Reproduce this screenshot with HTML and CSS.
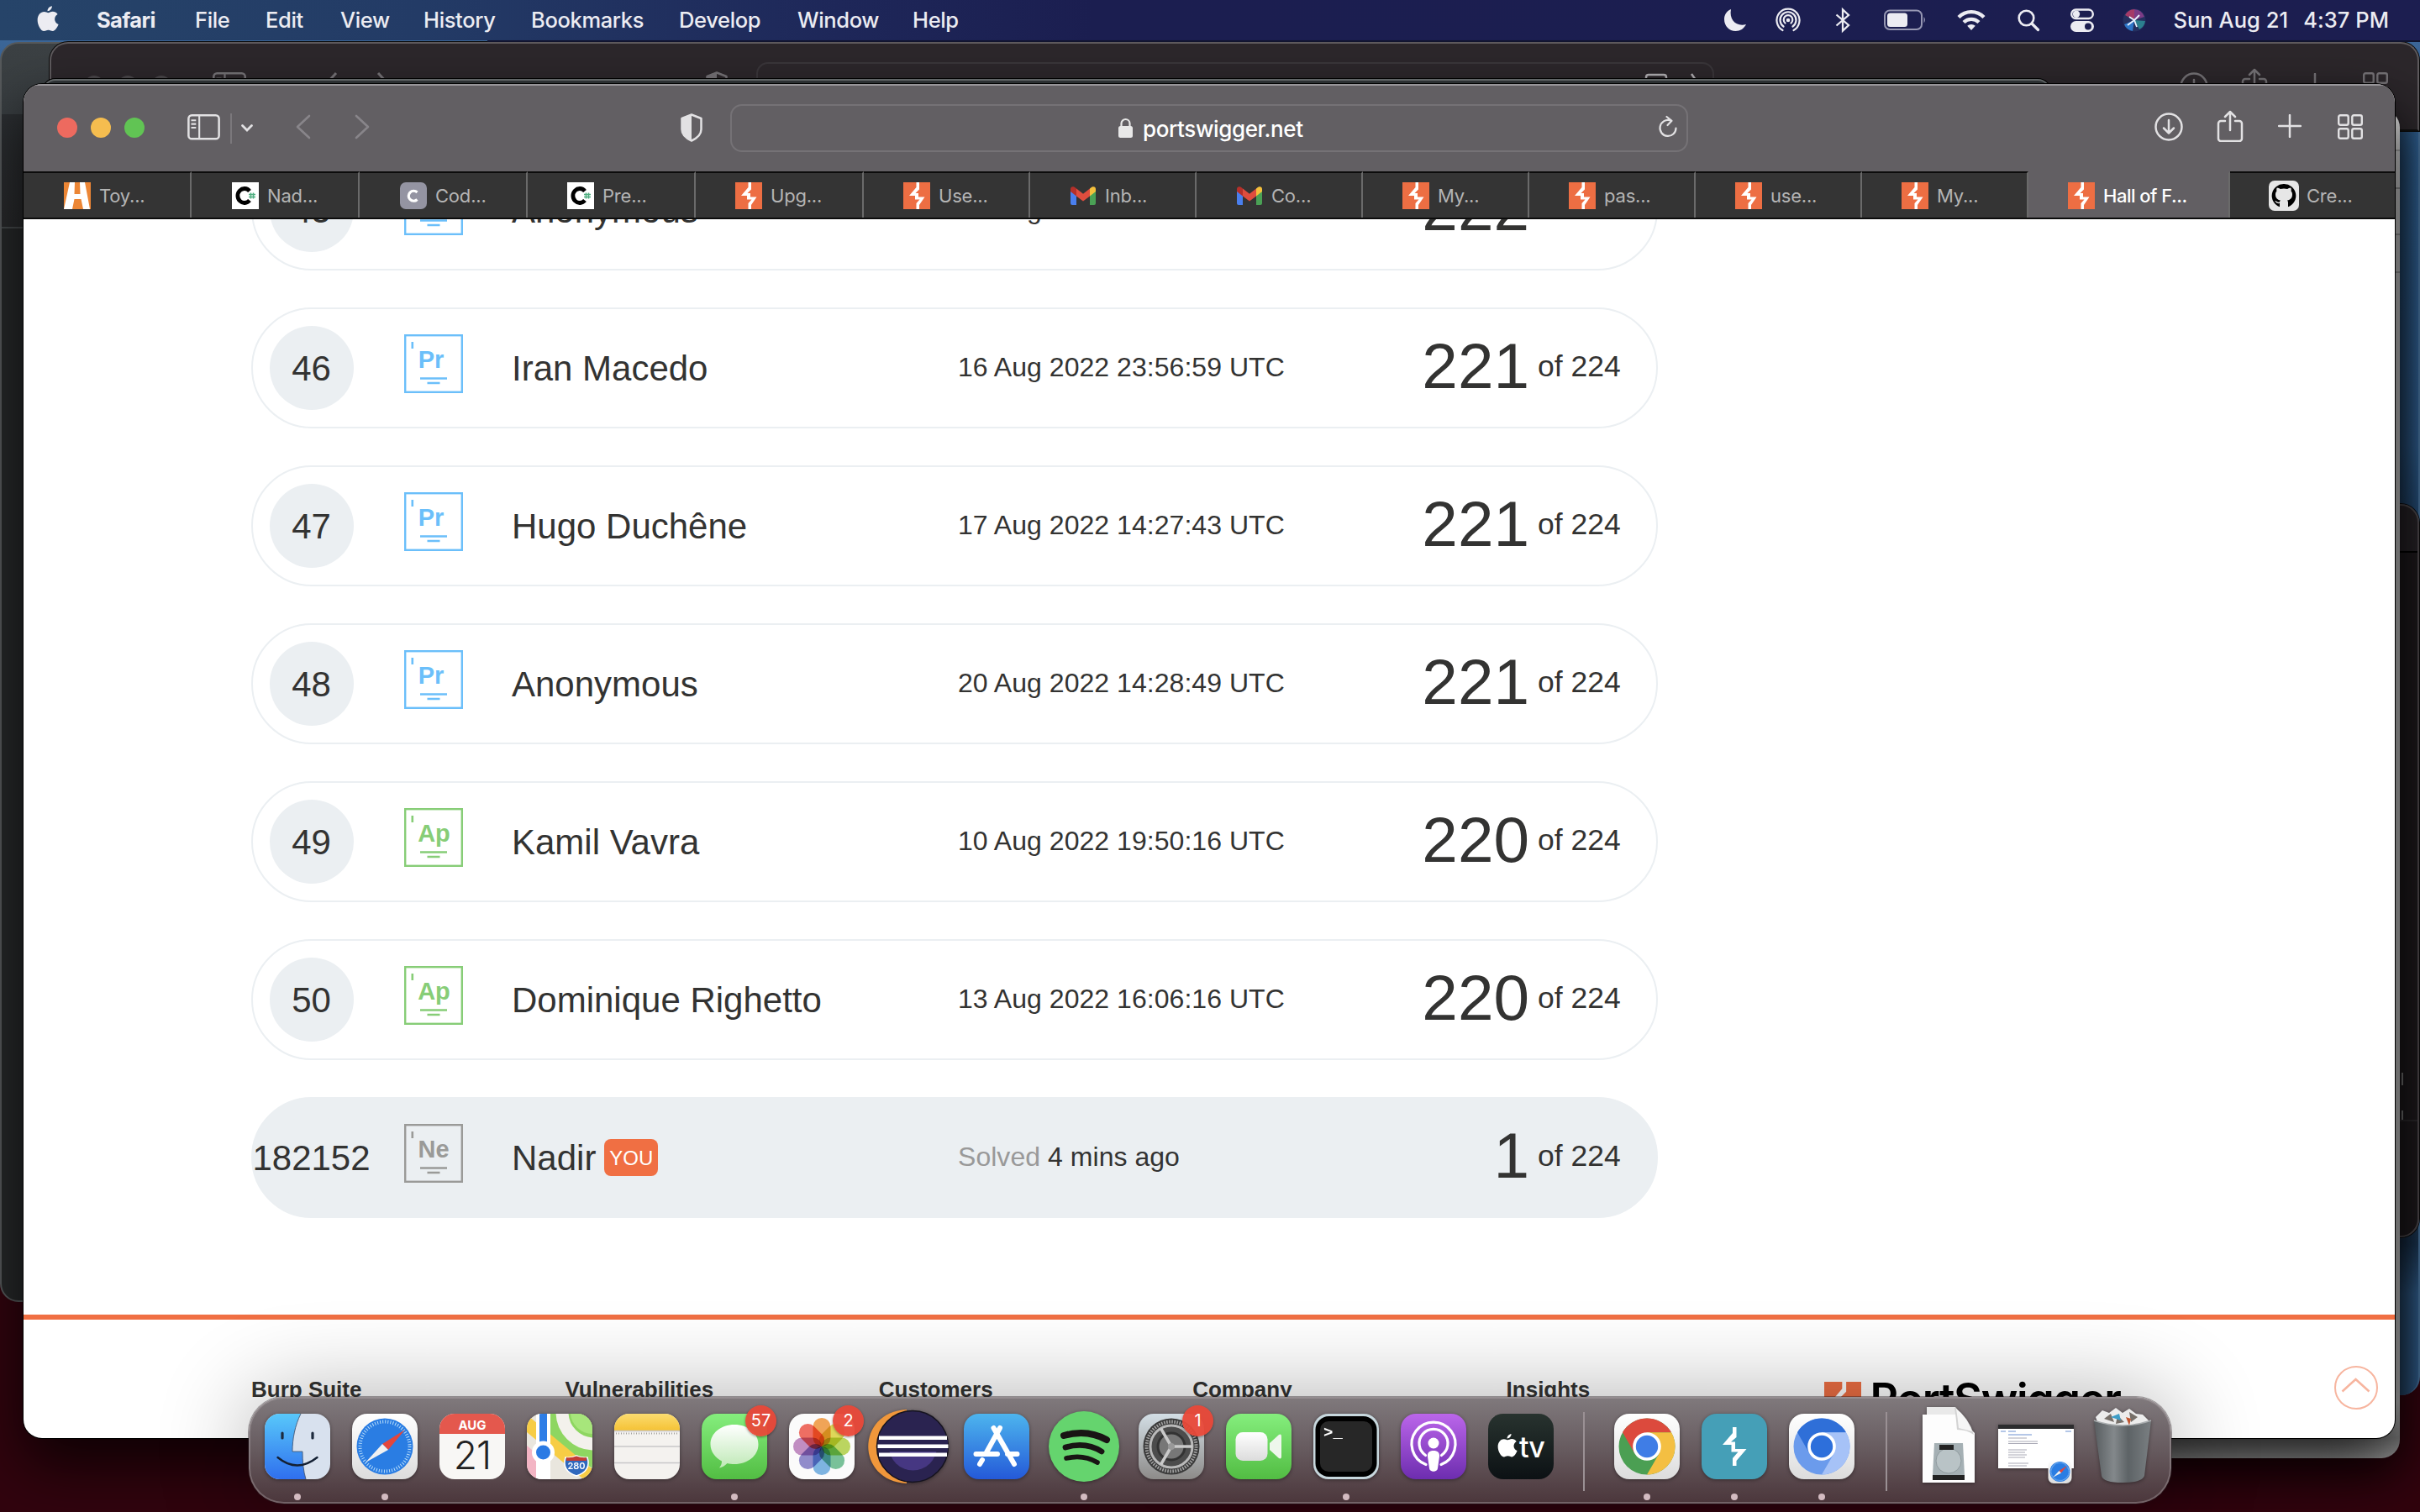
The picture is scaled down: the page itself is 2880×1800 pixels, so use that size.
FILE: index.html
```html
<!DOCTYPE html>
<html lang="en">
<head>
<meta charset="utf-8">
<title>Hall of Fame</title>
<link rel="stylesheet" href="styles.css">
</head>
<body>
<svg class="defs" width="0" height="0">
  <defs>
    <linearGradient id="gBlue" x1="0" y1="0" x2="0" y2="1"><stop offset="0" stop-color="#58c8fa"/><stop offset="1" stop-color="#2f6fee"/></linearGradient>
    <linearGradient id="gStore" x1="0" y1="0" x2="0" y2="1"><stop offset="0" stop-color="#4db5ee"/><stop offset="1" stop-color="#2459d8"/></linearGradient>
    <linearGradient id="gGreen" x1="0" y1="0" x2="0" y2="1"><stop offset="0" stop-color="#85ee7d"/><stop offset="1" stop-color="#52bd43"/></linearGradient>
    <linearGradient id="gWhite" x1="0" y1="0" x2="0" y2="1"><stop offset="0" stop-color="#ffffff"/><stop offset="1" stop-color="#dcdcdc"/></linearGradient>
    <linearGradient id="gBubble" x1="0" y1="0" x2="0" y2="1"><stop offset="0" stop-color="#ffffff"/><stop offset="1" stop-color="#bfe9b6"/></linearGradient>
    <linearGradient id="gPurple" x1="0" y1="0" x2="0" y2="1"><stop offset="0" stop-color="#bb66ea"/><stop offset="1" stop-color="#6d2daf"/></linearGradient>
    <linearGradient id="gYellow" x1="0" y1="0" x2="0" y2="1"><stop offset="0" stop-color="#fbdc70"/><stop offset="1" stop-color="#f5c235"/></linearGradient>
    <linearGradient id="gPref" x1="0" y1="0" x2="0" y2="1"><stop offset="0" stop-color="#d3dee5"/><stop offset="1" stop-color="#8d8b89"/></linearGradient>
    <linearGradient id="gBin" x1="0" y1="0" x2="1" y2="0"><stop offset="0" stop-color="#585d60"/><stop offset=".35" stop-color="#83888b"/><stop offset=".6" stop-color="#5d6366"/><stop offset="1" stop-color="#7a7f82"/></linearGradient>
    <clipPath id="tile"><rect width="78" height="78" rx="18"/></clipPath>
    <symbol id="apple" viewBox="0 0 24 28"><path d="M16.500 0c.3 2.600-2.200 5.600-4.900 5.500C11.300 3 13.800.3 16.500 0zM12.300 7.300c1.200 0 2.600-1.300 5-1.300 2 0 4.200 1.100 5.400 3-4.700 2.800-4 9.200.9 11.100-.9 2.700-3.600 7.300-6.200 7.300-1.900 0-2.600-1.200-4.900-1.200-2.200 0-3.100 1.200-4.800 1.200C4.400 27.400.6 20.800.6 15.300.6 9.500 4.300 6.200 7.800 6.200c2 0 3.500 1.100 4.500 1.100z"/></symbol>
    <symbol id="bolt" viewBox="0 0 32 32"><path fill="#ed6e43" d="M0 0h32v32H0z"/><path fill="#fff" d="M15.500 0h3.500v8.500L14.500 13H18v4.500h7.500L19 27v5h-3.500v-7l4-4.500H14V16H7l8.500-10z"/></symbol>
    <symbol id="csharp" viewBox="0 0 32 32"><path fill="#fff" d="M0 0h32v32H0z"/><path d="M21 10.500a8 8.500 0 1 0 0 11" fill="none" stroke="#000" stroke-width="4.800"/><path d="M22.500 12.500v7M25.500 12.500v7M20 14.500h8M20 17.500h8" stroke="#4fae80" stroke-width="1.500"/></symbol>
    <symbol id="gmail" viewBox="0 0 30 22"><path fill="#4a7fee" d="M0 4l7 5v13H2a2 2 0 0 1-2-2z"/><path fill="#4aa155" d="M30 4l-7 5v13h5a2 2 0 0 0 2-2z"/><path fill="#f4c03c" d="M23 2.500C27-1.500 30 .5 30 3v3l-7 5.500z"/><path fill="#b5302a" d="M7 2.500C3-1.500 0 .5 0 3v3l7 5.500z"/><path fill="#df4d3e" d="M7 2.500l8 6.300 8-6.300v9l-8 6-8-6z"/></symbol>
    <symbol id="download" viewBox="0 0 34 34"><g fill="none" stroke="currentColor" stroke-width="2.500" stroke-linecap="round" stroke-linejoin="round"><circle cx="17" cy="17" r="15.500"/><path d="M17 9v15M11 18.500l6 6 6-6"/></g></symbol>
    <symbol id="share" viewBox="0 0 32 38"><g fill="none" stroke="currentColor" stroke-width="2.500" stroke-linecap="round" stroke-linejoin="round"><path d="M10 13H5a3 3 0 0 0-3 3v18a3 3 0 0 0 3 3h22a3 3 0 0 0 3-3V16a3 3 0 0 0-3-3h-5M16 24V2M10 8l6-6 6 6"/></g></symbol>
    <symbol id="plus" viewBox="0 0 28 28"><path d="M14 1v26M1 14h26" fill="none" stroke="currentColor" stroke-width="2.500" stroke-linecap="round"/></symbol>
    <symbol id="grid" viewBox="0 0 30 30"><g fill="none" stroke="currentColor" stroke-width="2.400"><rect x="1.200" y="1.200" width="11.500" height="11.500" rx="2"/><rect x="17.300" y="1.200" width="11.500" height="11.500" rx="2"/><rect x="1.200" y="17.300" width="11.500" height="11.500" rx="2"/><rect x="17.300" y="17.300" width="11.500" height="11.500" rx="2"/></g></symbol>
    <symbol id="sidebar" viewBox="0 0 40 32"><g fill="none" stroke="currentColor" stroke-width="2.600"><rect x="1.300" y="1.300" width="37.400" height="29" rx="4"/><path d="M14.500 1v30M4.500 7.500h6M4.500 12h6M4.500 16.500h6" stroke-width="2.200"/></g></symbol>
    <symbol id="shield" viewBox="0 0 28 34"><path d="M14 1.500L2.500 6v13c0 6 5 10.500 11.500 13.500C20.500 29.500 25.500 25 25.500 19V6z" fill="none" stroke="currentColor" stroke-width="2.500" stroke-linejoin="round"/><path d="M14 1.500L2.500 6v13c0 6 5 10.500 11.500 13.500z" fill="currentColor"/></symbol>
    <symbol id="badge" viewBox="0 0 70 70"><g fill="none" stroke="currentColor"><rect x="1.200" y="1.200" width="67.600" height="67.600" stroke-width="2.400"/><path d="M9.800 9v8M19 52.500h32M27.500 58h15" stroke-width="2.600"/></g></symbol>
    <symbol id="compass" viewBox="0 0 78 78"><rect width="78" height="78" rx="18" fill="url(#gWhite)"/><circle cx="39" cy="39" r="33.500" fill="#2a7de3"/><circle cx="39" cy="39" r="29.500" fill="none" stroke="#b9defa" stroke-width="4" stroke-dasharray="1 2.090"/><path d="M63 19L43 43l-7-7z" fill="#e3463c"/><path d="M16 58l20-22 7 7z" fill="#f1f1f1"/></symbol>
  </defs>
</svg>

<div class="desktop">
  <div class="win win-blue"></div>
  <div class="win win-term"></div>
  <div class="win win-left"></div>
  <div class="win win-back">
    <i class="ghost-dots"></i>
    <svg class="bk bk-side"><use href="#sidebar"/></svg>
    <svg class="bk bk-nav" viewBox="0 0 90 30"><path d="M14 1L2 14M64 1l12 13" fill="none" stroke="currentColor" stroke-width="3"/></svg>
    <svg class="bk bk-shield"><use href="#shield"/></svg>
    <i class="ghost-url"></i>
    <svg class="bk bk-card" viewBox="0 0 70 20"><path d="M2 20V6q0-3 3-3h18q3 0 3 3v14M56 2l7 10" fill="none" stroke="currentColor" stroke-width="2.500"/></svg>
    <svg class="bk bk-dl"><use href="#download"/></svg>
    <svg class="bk bk-share"><use href="#share"/></svg>
    <svg class="bk bk-plus"><use href="#plus"/></svg>
    <svg class="bk bk-grid"><use href="#grid"/></svg>
  </div>
  <div class="win win-light"></div>
  <div class="win win-sliver"></div>

  <header class="menubar">
    <svg class="m-apple"><use href="#apple"/></svg>
    <nav class="menus">
      <b class="w-safari">Safari</b><span class="w-file">File</span><span class="w-edit">Edit</span><span class="w-view">View</span><span class="w-history">History</span><span class="w-book">Bookmarks</span><span class="w-dev">Develop</span><span class="w-window">Window</span><span>Help</span>
    </nav>
    <div class="status">
      <svg class="s-moon" viewBox="0 0 26 26"><path d="M8 0C2 2.500 0 7.500 0 12c0 8 6 14 13.500 14 5.500 0 10-3 12.500-8C14.500 21 5.500 13 8 0z" fill="currentColor"/></svg>
      <svg class="s-air" viewBox="0 0 30 28"><g fill="none" stroke="currentColor" stroke-width="2.200" stroke-linecap="round"><path d="M8.500 26A13.500 13.500 0 1 1 21.500 26M9.500 21.500A9.500 9.500 0 1 1 20.500 21.500M11.500 17.500A5.300 5.300 0 1 1 18.500 17.500"/></g><circle cx="15" cy="14" r="2.300" fill="currentColor"/></svg>
      <svg class="s-bt" viewBox="0 0 18 28"><path d="M1.500 7.500L16 20l-7 6.500V1.500L16 8 1.500 20.500" fill="none" stroke="currentColor" stroke-width="2.300"/></svg>
      <svg class="s-bat" viewBox="0 0 52 26"><rect x="1" y="1.500" width="44" height="22.500" rx="6" fill="none" stroke="#9697b3" stroke-width="2"/><rect x="4" y="4.500" width="24" height="16.500" rx="3.500" fill="currentColor"/><path d="M47.500 9q3 3.700 0 7.500z" fill="#9697b3"/></svg>
      <svg class="s-wifi" viewBox="0 0 34 26"><g fill="none" stroke="currentColor" stroke-width="4.300"><path d="M2 9.500a21 21 0 0 1 30 0M8 15.500a12.800 12.800 0 0 1 18 0"/></g><path d="M17 25l-4.800-5.200a7 7 0 0 1 9.600 0z" fill="currentColor"/></svg>
      <svg class="s-find" viewBox="0 0 26 26"><circle cx="10.500" cy="10.500" r="8.800" fill="none" stroke="currentColor" stroke-width="2.600"/><path d="M17 17l7.500 7.500" stroke="currentColor" stroke-width="3.200" stroke-linecap="round"/></svg>
      <svg class="s-ctl" viewBox="0 0 28 28"><rect x="1.200" y="1.500" width="25.600" height="10.500" rx="5.200" fill="none" stroke="currentColor" stroke-width="2.400"/><circle cx="7" cy="6.800" r="4.200" fill="currentColor"/><rect y="15" width="28" height="13" rx="6.500" fill="currentColor"/><circle cx="21" cy="21.500" r="4" fill="#1c1e50"/></svg>
      <svg class="s-siri" viewBox="0 0 28 28"><circle cx="14" cy="14" r="13.500" fill="#25305f"/><path d="M14 1a13 13 0 0 1 12 9l-12 4z" fill="#7c3b86"/><path d="M3 8a13 13 0 0 1 11-7v13z" fill="#a53a68"/><path d="M2 19a13 13 0 0 0 10 8l2-13z" fill="#2d75c8"/><path d="M27 15a13 13 0 0 1-7 10l-6-11z" fill="#2b7f8e"/><path d="M14 14L6 20M14 14l6-6M14 14l3 8M14 14L8 10" stroke="#e8f3ff" stroke-width="1.800"/></svg>
      <span class="date">Sun Aug 21</span><span>4:37 PM</span>
    </div>
  </header>

  <main class="safari">
    <div class="toolbar">
      <div class="lights"><i class="r"></i><i class="y"></i><i class="g"></i></div>
      <svg class="t-side"><use href="#sidebar"/></svg>
      <i class="t-rule"></i>
      <svg class="t-drop" viewBox="0 0 14 9"><path d="M1.500 1.500L7 7l5.500-5.500" fill="none" stroke="currentColor" stroke-width="2.800" stroke-linecap="round"/></svg>
      <svg class="t-nav" viewBox="0 0 88 30"><path d="M16 2L2 15l14 13M72 2l14 13-14 13" fill="none" stroke="currentColor" stroke-width="2.600" stroke-linecap="round" stroke-linejoin="round"/></svg>
      <svg class="t-shield"><use href="#shield"/></svg>
      <div class="url">
        <svg class="lock" viewBox="0 0 17 24"><rect y="10" width="17" height="14" rx="2.500" fill="currentColor"/><path d="M3.500 11V7a5 5 0 0 1 10 0v4" fill="none" stroke="currentColor" stroke-width="2.200"/></svg>
        <span>portswigger.net</span>
        <svg class="reload" viewBox="0 0 22 26"><path d="M20.500 14.500a9.500 9.500 0 1 1-7-9.200M9.500 1l6 4.800-5 5.200" fill="none" stroke="currentColor" stroke-width="2.200" stroke-linecap="round" stroke-linejoin="round"/></svg>
      </div>
      <div class="tools">
        <svg class="i-dl"><use href="#download"/></svg>
        <svg class="i-share"><use href="#share"/></svg>
        <svg class="i-plus"><use href="#plus"/></svg>
        <svg class="i-grid"><use href="#grid"/></svg>
      </div>
    </div>
    <nav class="tabs">
      <a><svg viewBox="0 0 32 32"><path fill="#ec8635" d="M0 0h32v32H0z"/><path fill="#fff" d="M7 0h6l-.5 14h7L19 0h6l6 32h-8l-2.500-12h-8L10 32H0z"/></svg>Toy...</a>
      <a><svg><use href="#csharp"/></svg>Nad...</a>
      <a><svg viewBox="0 0 32 32"><rect width="32" height="32" rx="7" fill="#9494a2"/><path d="M20.500 12a6 6 0 1 0 0 8.500" fill="none" stroke="#fff" stroke-width="3.200"/></svg>Cod...</a>
      <a><svg><use href="#csharp"/></svg>Pre...</a>
      <a><svg><use href="#bolt"/></svg>Upg...</a>
      <a><svg><use href="#bolt"/></svg>Use...</a>
      <a><svg><use href="#gmail"/></svg>Inb...</a>
      <a><svg><use href="#gmail"/></svg>Co...</a>
      <a><svg><use href="#bolt"/></svg>My...</a>
      <a><svg><use href="#bolt"/></svg>pas...</a>
      <a><svg><use href="#bolt"/></svg>use...</a>
      <a><svg><use href="#bolt"/></svg>My...</a>
      <a class="on"><svg><use href="#bolt"/></svg>Hall of F...</a>
      <a class="last"><svg viewBox="0 0 36 36"><rect width="36" height="36" rx="7" fill="#e6e6e6"/><path d="M18 4a14 14 0 0 0-5 27.200V27c-4 .8-4.500-2-6-3 2-.3 3 2.500 6 1.500.1-1 .5-1.600 1-2-4-.6-6-3-6-7 0-1.800.5-3 1.500-4-.4-1.500-.2-3 .3-4 1.700 0 3 .8 4 1.500a16 16 0 0 1 8.400 0c1-.7 2.300-1.500 4-1.500.5 1 .7 2.500.3 4 1 1 1.500 2.200 1.500 4 0 4-2 6.400-6 7 .7.600 1 1.600 1 3v4.700A14 14 0 0 0 18 4z"/></svg>Cre...</a>
    </nav>

    <section class="page">
      <div class="board">
        <div class="row"><span class="rank"><em>45</em></span><span class="lvl pr"><svg><use href="#badge"/></svg><b>Pr</b></span><span class="name">Anonymous</span><span class="when">16 Aug 2022 22:33:48 UTC</span><span class="score">222</span><span class="of">of 224</span></div>
        <div class="row"><span class="rank"><em>46</em></span><span class="lvl pr"><svg><use href="#badge"/></svg><b>Pr</b></span><span class="name">Iran Macedo</span><span class="when">16 Aug 2022 23:56:59 UTC</span><span class="score">221</span><span class="of">of 224</span></div>
        <div class="row"><span class="rank"><em>47</em></span><span class="lvl pr"><svg><use href="#badge"/></svg><b>Pr</b></span><span class="name">Hugo Duchêne</span><span class="when">17 Aug 2022 14:27:43 UTC</span><span class="score">221</span><span class="of">of 224</span></div>
        <div class="row"><span class="rank"><em>48</em></span><span class="lvl pr"><svg><use href="#badge"/></svg><b>Pr</b></span><span class="name">Anonymous</span><span class="when">20 Aug 2022 14:28:49 UTC</span><span class="score">221</span><span class="of">of 224</span></div>
        <div class="row"><span class="rank"><em>49</em></span><span class="lvl ap"><svg><use href="#badge"/></svg><b>Ap</b></span><span class="name">Kamil Vavra</span><span class="when">10 Aug 2022 19:50:16 UTC</span><span class="score">220</span><span class="of">of 224</span></div>
        <div class="row"><span class="rank"><em>50</em></span><span class="lvl ap"><svg><use href="#badge"/></svg><b>Ap</b></span><span class="name">Dominique Righetto</span><span class="when">13 Aug 2022 16:06:16 UTC</span><span class="score">220</span><span class="of">of 224</span></div>
        <div class="row me"><span class="rank"><em>182152</em></span><span class="lvl ne"><svg><use href="#badge"/></svg><b>Ne</b></span><span class="name">Nadir<i class="you">YOU</i></span><span class="when"><span class="dim">Solved</span> 4 mins ago</span><span class="score">1</span><span class="of">of 224</span></div>
      </div>
      <footer class="foot">
        <b>Burp Suite</b><b>Vulnerabilities</b><b>Customers</b><b>Company</b><b>Insights</b>
        <div class="brand"><svg><use href="#bolt"/></svg><span>PortSwigger</span></div>
      </footer>
    </section>
    <a class="to-top"><svg viewBox="0 0 52 52"><circle cx="26" cy="26" r="25" fill="none" stroke="#f7b59f" stroke-width="2"/><path d="M9.500 30.500L25.500 16l16 14.500" fill="none" stroke="#f7b59f" stroke-width="2.600"/></svg></a>
  </main>

  <div class="dock">
    <div class="app run"><svg viewBox="0 0 78 78"><g clip-path="url(#tile)"><path fill="#d8e1ee" d="M0 0h78v78H0z"/><path fill="url(#gBlue)" d="M0 0h43C36 14 33 30 33 45h12c0 12 1 23 4 33H0z"/></g><path d="M43 0C36 14 33 30 33 45h12c0 12 1 23 4 33" fill="none" stroke="#3b4b66" stroke-width=".8"/><path d="M21 23v6M57 23v6" stroke="#1d2a3d" stroke-width="3.200" stroke-linecap="round"/><path d="M15.500 52q23 19 47 0" fill="none" stroke="#142033" stroke-width="2.400" stroke-linecap="round"/></svg></div>
    <div class="app run"><svg><use href="#compass"/></svg></div>
    <div class="app"><div class="cal"><b>AUG</b><span>21</span></div></div>
    <div class="app"><svg viewBox="0 0 78 78"><g clip-path="url(#tile)"><path fill="#e9e6de" d="M0 0h78v78H0z"/><path fill="#8ed661" d="M28 0h50v65L28 30z"/><circle cx="80" cy="-2" r="38" fill="none" stroke="#f3f1ec" stroke-width="15"/><path fill="#a7e67b" d="M52 0h26v24A26 26 0 0 1 52 0z"/><path d="M-2 10l82 68" stroke="#f7cd45" stroke-width="16"/><path fill="#f3b5c4" d="M0 38l12 10v30H0z"/><path fill="#fff" d="M11 0h17v78H11z"/><path fill="#2d7de6" d="M15 0h9v44h-9z"/></g><circle cx="19.500" cy="46" r="13.500" fill="#fff"/><circle cx="19.500" cy="46" r="8.500" fill="#2a7ae4"/><path d="M46 52q6 1 13-2 7 3 13 2 5 16-13 22-18-6-13-22z" fill="#2f68bd" stroke="#fff" stroke-width="1.500"/><path d="M47 52q6 1 12-1.500 6 2.500 12 1.500v4H47z" fill="#c23c35"/><text x="59" y="66" class="shield-t">280</text></svg></div>
    <div class="app"><svg viewBox="0 0 78 78"><g clip-path="url(#tile)"><path fill="#f4f2ef" d="M0 0h78v78H0z"/><path fill="url(#gYellow)" d="M0 0h78v20H0z"/><path d="M2 23.500h74" stroke="#a5a3a0" stroke-width="2" stroke-dasharray="1 2"/><path d="M0 20.500h78M0 39h78M0 58.500h78" stroke="#c7c7c9" stroke-width="1.300"/></g></svg></div>
    <div class="app run"><svg viewBox="0 0 78 78"><rect width="78" height="78" rx="18" fill="url(#gGreen)"/><path d="M39 13c16 0 28.500 10 28.500 23.500S55 60 39 60c-3 0-6-.4-8.500-1-3 3-6 5-9.500 5.500 2-2.500 3-5 3-8C16 52 10.500 45 10.500 36.500 10.500 23 23 13 39 13z" fill="url(#gBubble)"/></svg><span class="count">57</span></div>
    <div class="app"><svg viewBox="0 0 78 78"><rect width="78" height="78" rx="18" fill="#fbfbfb"/><g class="petals"><rect x="28.500" y="5" width="21" height="34" rx="10.500" fill="#f08a1f"/><rect x="28.500" y="5" width="21" height="34" rx="10.500" fill="#d9cf22" transform="rotate(45 39 39)"/><rect x="28.500" y="5" width="21" height="34" rx="10.500" fill="#a8cc2b" transform="rotate(90 39 39)"/><rect x="28.500" y="5" width="21" height="34" rx="10.500" fill="#4fb07a" transform="rotate(135 39 39)"/><rect x="28.500" y="5" width="21" height="34" rx="10.500" fill="#559fdd" transform="rotate(180 39 39)"/><rect x="28.500" y="5" width="21" height="34" rx="10.500" fill="#6f68bf" transform="rotate(225 39 39)"/><rect x="28.500" y="5" width="21" height="34" rx="10.500" fill="#b06ab2" transform="rotate(270 39 39)"/><rect x="28.500" y="5" width="21" height="34" rx="10.500" fill="#ee4030" transform="rotate(315 39 39)"/></g></svg><span class="count">2</span></div>
    <div class="app"><svg class="wide eclipse" viewBox="0 0 96 88"><path d="M46 0C-15 3-15 85 46 88z" fill="#f0973b"/><circle cx="53" cy="44" r="42.500" fill="#2a2350" stroke="#15131f" stroke-width="1.500"/><path d="M25 44h57a28 28 0 0 1-57 0z" fill="#463782"/><path fill="#2a2350" d="M12 36h83v14H12z"/><path fill="#fff" d="M13 31.500h81v4.500H13zM11.500 41.500h84V46h-84zM13 51.500h81V56H13z"/></svg></div>
    <div class="app"><svg viewBox="0 0 78 78"><rect width="78" height="78" rx="18" fill="url(#gStore)"/><path d="M43 17L27 46M35.500 17L60 60M14.500 48H40M52 48h11.500M22 55l-3 5" stroke="#fff" stroke-width="6" stroke-linecap="round"/></svg></div>
    <div class="app run"><svg class="wide" viewBox="0 0 84 84"><circle cx="42" cy="42" r="42" fill="#65d46e"/><g fill="none" stroke="#191414" stroke-linecap="round"><path d="M18 29q28-8 51 5" stroke-width="8"/><path d="M20 43q24-7 43 5" stroke-width="6.800"/><path d="M21 56q20-5 37 5" stroke-width="5.600"/></g></svg></div>
    <div class="app"><svg viewBox="0 0 78 78"><rect width="78" height="78" rx="18" fill="url(#gPref)"/><circle cx="39" cy="39" r="33.500" fill="#3a3a3a"/><circle cx="39" cy="39" r="29.500" fill="none" stroke="#a2a2a2" stroke-width="4" stroke-dasharray="1.600 1.490"/><circle cx="39" cy="39" r="25" fill="#4c4c4c" stroke="#b9b9b9" stroke-width="3"/><circle cx="39" cy="39" r="16" fill="#777" stroke="#333" stroke-width="3"/><path d="M39 39h25M39 39L26.500 17.500M39 39L26.500 60.500" stroke="#c9c9c9" stroke-width="3.500"/><circle cx="39" cy="39" r="4" fill="#999"/></svg><span class="count">1</span></div>
    <div class="app"><svg viewBox="0 0 78 78"><rect width="78" height="78" rx="18" fill="url(#gGreen)"/><rect x="11.500" y="22" width="38" height="34" rx="8.500" fill="url(#gWhite)"/><path d="M52 35l11-10q3-1.500 3 2v24q0 3.500-3 2L52 43z" fill="#eef7ec"/></svg></div>
    <div class="app run"><svg viewBox="0 0 78 78"><rect width="78" height="78" rx="18" fill="#c7d7dd"/><rect x="2.500" y="3" width="73" height="72" rx="16" fill="#000"/><rect x="8" y="9" width="62" height="60" rx="10" fill="#272727"/><text x="12" y="28" class="term">&gt;_</text></svg></div>
    <div class="app"><svg viewBox="0 0 78 78"><rect width="78" height="78" rx="18" fill="url(#gPurple)"/><g fill="none" stroke="#fff" stroke-width="3.200" stroke-linecap="round"><path d="M30 60.500a26 26 0 1 1 18 0"/><path d="M29.500 49.500a17 17 0 1 1 19 0"/></g><circle cx="39" cy="35" r="6.500" fill="#fff"/><path d="M39 44c5 0 7.500 2.500 7 7l-2 14c-.5 5-9.500 5-10 0l-2-14c-.5-4.500 2-7 7-7z" fill="#fff"/></svg></div>
    <div class="app"><div class="tv"><svg><use href="#apple"/></svg>tv</div></div>
    <i class="sep"></i>
    <div class="app run"><svg viewBox="0 0 78 78"><rect width="78" height="78" rx="18" fill="url(#gWhite)"/><circle cx="39" cy="39" r="33.500" fill="#4b9f53"/><path d="M10 22.200A33.500 33.500 0 0 1 68 22.200L39 22.200 24.500 47.400z" fill="#dc4a3d"/><path d="M68 22.200A33.500 33.500 0 0 1 39 72.500L53.500 47.400 39 22.200z" fill="#f4bf42"/><circle cx="39" cy="39" r="16.800" fill="#fff"/><circle cx="39" cy="39" r="13.200" fill="#3f7de6"/></svg></div>
    <div class="app run"><svg viewBox="0 0 78 78"><rect width="78" height="78" rx="18" fill="#459fb7"/><path d="M37 16h4.500v12L35 33.500h5V42h13.500L41.500 56v6H37v-9l6.500-7.500h-8V37H25L37 23z" fill="#fff"/></svg></div>
    <div class="app run"><svg viewBox="0 0 78 78"><rect width="78" height="78" rx="18" fill="url(#gWhite)"/><circle cx="39" cy="39" r="33.500" fill="#6b9bec"/><path d="M10 22.200A33.500 33.500 0 0 1 68 22.200L39 22.200 24.500 47.400z" fill="#2f6fd8"/><path d="M68 22.200A33.500 33.500 0 0 1 39 72.500L53.500 47.400 39 22.200z" fill="#a6c2f7"/><circle cx="39" cy="39" r="16.800" fill="#fff"/><circle cx="39" cy="39" r="13.200" fill="#2d6fdb"/></svg></div>
    <i class="sep sep2"></i>
    <div class="app"><svg class="doc" viewBox="0 0 62 90"><path fill="#e9e9e9" d="M5 0h34l8 10v20H5z"/><path fill="#fdfdfd" d="M0 9h40l22 22v59H0z"/><path fill="#d3d3d3" d="M38 0q2 14 3 27 12 0 20 6Q56 14 38 0z"/><path fill="#f6f6f6" d="M40 2q2 13 3 23l16 4Q53 12 40 2z"/><path fill="#a5b0b4" d="M14 43h34l2 38H12z"/><circle cx="31" cy="64" r="15" fill="#b9c3c6" stroke="#8f9a9e"/><path fill="#222" d="M20 45h17v6H20zM12 81h38v6H12z"/></svg></div>
    <div class="app"><svg class="mini" viewBox="0 0 90 70"><path fill="#fff" d="M0 0h90v52H0z"/><path fill="#2c2c2e" d="M0 0h90v5H0z"/><path d="M3 8h6M12 8h9M80 8h7M12 12h28" stroke="#6b8fd0" stroke-width="1"/><path d="M12 16h22M12 20h35M12 22.500h35M12 30h22M12 33h20M12 36h22M12 39h20M12 46h24M12 49h22" stroke="#a9a9b5" stroke-width="1"/><svg x="59" y="42" width="29" height="28"><use href="#compass"/></svg></svg></div>
    <div class="app"><svg class="bin" viewBox="0 0 68 90"><path d="M2 12l8-8 8 3 8-6 8 6 8-5 8 6 8 1 8 8-6 12H8z" fill="#ececec"/><path d="M12 14l8-6 4 10zM28 10l8 8-10 2zM42 6l10 6-8 6z" fill="#77706a"/><path d="M20 12l10-4 2 8z" fill="#3d9dc7"/><path d="M38 12l6 2-2 8z" fill="#c0552f"/><path d="M0 16q34 12 68 0L60 82q-3 8-26 8T9 82z" fill="url(#gBin)"/><path d="M0 16q34 12 68 0" fill="none" stroke="#a9adaf" stroke-width="1.500"/></svg></div>
  </div>
</div>
</body>
</html>
```

FILE: styles.css
```css
* { box-sizing: border-box; }
body { margin: 0; font-family: Inter, "Liberation Sans", sans-serif; }
.defs { position: absolute; }
svg { display: block; flex: none; overflow: visible; }

.desktop {
  position: relative;
  width: 2880px;
  height: 1800px;
  overflow: hidden;
  background: linear-gradient(#3d6da0 0, #35507e 200px, #2b2350 600px, #31040e 1300px, #31040e 100%);
}
.desktop::after {
  content: "";
  position: absolute;
  left: 580px; top: 48px;
  width: 2300px; height: 2px;
  background: #11142f;
}

/* Stacked windows on the desktop */
.win { position: absolute; overflow: hidden; }
.win-blue {
  left: 2600px; top: 100px; width: 280px; height: 1561px;
  border-radius: 0 0 22px 22px;
  border-right: 2px solid #456f98;
  background: linear-gradient(90deg, rgba(0, 0, 0, .25) 256px, rgba(0, 0, 0, 0)), linear-gradient(#2f5f90 0, #2d5988 430px, #234a73 510px, #1a3450 1380px, #2f5985 1440px, #2f5985);
}
.win-term {
  left: 2600px; top: 600px; width: 279px; height: 873px;
  border-radius: 22px;
  border: 2px solid #4c474a;
  background:
    linear-gradient(#777, #777) 256px 675px / 2px 15px no-repeat,
    linear-gradient(#777, #777) 256px 720px / 2px 11px no-repeat,
    linear-gradient(#262226 54px, #000 54px, #000 56px, #1d191c 56px, #1d191c 731px, #2b282b 731px, #2b282b 733px, #1d191c 733px);
  box-shadow: 0 0 0 1px #0b0b0b;
}
.win-left {
  left: 0; top: 50px; width: 700px; height: 1500px;
  border-radius: 22px;
  border: 2px solid #56595b;
  background: linear-gradient(#3c4144 0, #383d40 84px, #2b2e31 84px, #28292b 218px, #44484a 218px, #44484a 220px, #262829 220px, #262829);
}
.win-back {
  left: 59px; top: 50px; width: 2820px; height: 106px;
  border-radius: 22px 22px 0 0;
  border: 2px solid #5e5a5d;
  border-bottom-color: #111;
  background: #2c272b;
  box-shadow: 0 0 0 1px #0b0b0b;
  color: #757276;
}
.ghost-dots {
  position: absolute; left: 39px; top: 38px;
  width: 24px; height: 24px; border-radius: 50%;
  background: #4a474a;
  box-shadow: 40px 0 #4a474a, 80px 0 #4a474a;
}
.ghost-url {
  position: absolute; left: 839px; top: 22px;
  width: 1140px; height: 56px;
  border: 2px solid #3a363a; border-radius: 14px;
}
.bk { position: absolute; top: 34px; }
.bk-side { left: 192px; width: 40px; height: 32px; }
.bk-nav { left: 325px; width: 90px; height: 30px; }
.bk-shield { left: 778px; top: 33px; width: 28px; height: 34px; }
.bk-card { left: 1896px; top: 34px; width: 70px; height: 20px; color: #b0aeb1; }
.bk-dl { left: 2533px; width: 34px; height: 34px; }
.bk-share { left: 2606px; top: 29px; width: 32px; height: 38px; }
.bk-plus { left: 2680px; top: 35px; width: 28px; height: 28px; }
.bk-grid { left: 2751px; width: 30px; height: 30px; }
.win-sliver {
  left: 50px; top: 94px; width: 2391px; height: 60px;
  border-radius: 16px 16px 0 0;
  border: 2px solid #6d7274;
  background: #33383b;
  box-shadow: 0 0 0 1px #000;
}
.win-light {
  left: 1400px; top: 130px; width: 1456px; height: 1606px;
  border-radius: 22px;
  background: linear-gradient(#e4e4e4 0, #c4c4c4 48px, #999 48px, #999 50px, #bdbdbd 50px, #b4b4b4 93px, #808080 93px, #808080 95px, #b0b0b0 95px, #adadad 148px, #808080 148px, #808080 150px, #a8a8a8 150px, #a8a8a8 193px, #808080 193px, #808080 195px, #a8a8a8 195px, #a8a8a8 1540px, #7a7a7a 1582px, #989898);
  box-shadow: 0 20px 50px rgba(0, 0, 0, .5);
}

/* Menu bar */
.menubar {
  position: absolute; left: 0; top: 0;
  width: 2880px; height: 48px;
  display: flex; align-items: center;
  padding: 0 37px 0 44px;
  background: linear-gradient(90deg, #264469 0, #233b66 500px, #1e2759 1000px, #1b1e50 1300px, #1c1e50);
  color: #ececf2;
  font-size: 25.5px; line-height: 48px;
}
.m-apple { width: 26px; height: 31px; margin-top: -4px; fill: currentColor; }
.menus { display: flex; flex: 1; margin-left: 45px; font-weight: 500; letter-spacing: -.35px; }
.menus b { font-weight: 700; letter-spacing: -.6px; }
.w-safari { width: 117px; }
.w-file { width: 84px; }
.w-edit { width: 89px; }
.w-view { width: 99px; }
.w-history { width: 128px; }
.w-book { width: 176px; }
.w-dev { width: 141px; }
.w-window { width: 137px; }
.status { display: flex; align-items: center; font-weight: 500; letter-spacing: .05px; white-space: nowrap; }
.status svg { height: 28px; }
.s-moon { width: 26px; margin-right: 35px; }
.s-air { width: 30px; margin-right: 41px; }
.s-bt { width: 18px; margin-right: 40px; }
.s-bat { width: 52px; margin-right: 35px; }
.s-wifi { width: 34px; margin-right: 38px; }
.s-find { width: 26px; margin-right: 37px; }
.s-ctl { width: 28px; margin-right: 34px; }
.s-siri { width: 28px; margin-right: 32px; }
.date { margin-right: 18px; }

/* Browser window */
.safari {
  position: absolute; left: 28px; top: 100px;
  width: 2822px; height: 1612px;
  border-radius: 22px;
  overflow: hidden;
  background: #fff;
  box-shadow: 0 0 0 1px #000, 0 30px 70px rgba(0, 0, 0, .75);
}
.toolbar {
  height: 104px;
  display: flex; align-items: center;
  padding: 0 38px 0 40px;
  border-top: 2px solid #98969a;
  background: #625f63;
  color: #e2e1e3;
}
.lights { display: flex; gap: 16px; margin-top: -2px; }
.lights i { width: 24px; height: 24px; border-radius: 50%; }
.r { background: #ed6a5f; }
.y { background: #f5bd4f; }
.g { background: #61c454; }
.t-side { width: 39px; height: 31px; margin: -4px 0 0 51px; }
.t-rule { width: 2px; height: 36px; margin-left: 12px; background: #7b787c; }
.t-drop { width: 14px; height: 9px; margin: -2px 0 0 11px; }
.t-nav { width: 88px; height: 30px; margin: -4px 0 0 51px; color: #88858a; }
.t-shield { width: 28px; height: 34px; margin: -3px 0 0 369px; }
.url {
  width: 1140px; height: 57px;
  margin: -2px 0 0 32px;
  display: flex; align-items: center;
  padding: 0 12px 0 460px;
  border: 2px solid #757276; border-radius: 14px;
  color: #fff; font-size: 26px; font-weight: 500; letter-spacing: -.4px;
}
.url span { margin-top: 3px; }
.lock { width: 17px; height: 24px; margin-right: 12px; color: #e8e8e8; }
.reload { width: 22px; height: 26px; margin: -2px -1px 0 auto; color: #e2e1e3; }
.tools { flex: 1; display: flex; align-items: center; justify-content: flex-end; margin-top: -4px; }
.i-dl { width: 34px; height: 34px; margin-right: 40px; }
.i-share { width: 32px; height: 38px; margin: -2px 41px 0 0; }
.i-plus { width: 28px; height: 28px; margin: -2px 43px 0 0; }
.i-grid { width: 30px; height: 30px; }
.tabs {
  height: 57px;
  display: grid;
  grid-template-columns: repeat(5, 200px) 198px repeat(6, 198px) 240px 1fr;
  border-bottom: 2px solid #0c0c0c;
}
.tabs a {
  display: flex; align-items: center; gap: 10px;
  padding-left: 48px;
  border-top: 2px solid #0c0c0c;
  border-right: 2px solid #6a6a6a;
  background: #343434;
  color: #b4b4b4;
  font-size: 22px; letter-spacing: -.2px; white-space: nowrap;
}
.tabs a:nth-child(n+4) { padding-left: 47px; }
.tabs svg { width: 32px; height: 32px; }
.tabs .on { background: #625f63; color: #fff; font-weight: 500; border-top-color: #625f63; letter-spacing: -.5px; }
.tabs a.last { padding-left: 46px; border-right: 0; gap: 9px; }
.tabs .last svg { width: 36px; height: 36px; }
.tabs a:nth-child(7), .tabs a:nth-child(8) { padding-left: 48px; gap: 11px; }
.tabs a:nth-child(7) svg, .tabs a:nth-child(8) svg { width: 30px; height: 22px; }

/* Leaderboard */
.page {
  height: 1451px;
  overflow: hidden;
  display: flex; flex-direction: column; justify-content: flex-end;
  font-family: "Liberation Sans", Arial, sans-serif;
  color: #333332;
}
.board { display: flex; flex-direction: column; gap: 44px; padding-left: 271px; }
.row {
  width: 1674px; height: 144px; flex: none;
  display: grid; align-items: center;
  grid-template-columns: 142px 129px 531px 440px 277px 1fr;
  border: 2px solid #ebeff2; border-radius: 72px;
  background: #fff;
}
.row > * { white-space: nowrap; }
.rank { display: flex; justify-content: center; align-items: center; width: 100px; height: 100px; margin-left: 20px; border-radius: 50%; background: #ebeff2; }
.rank em { font-style: normal; font-size: 42px; margin: 2px 0 0 -1px; }
.me { background: #ebeff2; }
.lvl { position: relative; width: 70px; height: 70px; margin: -10px 0 0 38px; }
.lvl svg { width: 70px; height: 70px; }
.lvl b { position: absolute; left: 0; right: 0; top: 12px; text-align: center; font-size: 29px; line-height: 36px; }
.pr { color: #6bbffa; }
.pr b { left: -6px; }
.ap { color: #87cd77; }
.ap b { left: 1px; }
.ne b { left: 0; }
.ne { color: #9a9a98; }
.name { display: flex; align-items: center; margin: 2px 0 0 37px; font-size: 42px; }
.you { font-style: normal; margin: -2px 0 0 10px; width: 64px; height: 44px; line-height: 46px; border-radius: 8px; background: #f06f43; color: #fff; font-size: 24px; text-align: center; }
.when { margin-left: 37px; font-size: 32px; letter-spacing: .04px; margin-top: -1px; }
.dim { color: #999; }
.score { font-size: 76.500px; text-align: right; margin-top: -4px; line-height: 90px; }
.of { font-size: 35.500px; margin: -3px 0 0 10px; }

/* Footer */
.foot {
  height: 147px;
  margin-top: 115px;
  flex: none;
  display: grid;
  grid-template-columns: repeat(4, 373.4px) 378px 1fr;
  align-items: start;
  padding: 68px 0 0 271px;
  border-top: 6px solid #f06f43;
  font-size: 26px;
}
.foot b { line-height: 30px; }
.brand { display: flex; align-items: flex-start; gap: 11px; margin-top: 6px; color: #000; font: 600 52px/52px Inter, sans-serif; letter-spacing: -1.3px; }
.brand svg { width: 44px; height: 44px; }
.brand span { margin-top: -5px; }
.to-top { position: absolute; right: 20px; bottom: 34px; width: 52px; height: 52px; }

/* Dock */
.dock {
  position: absolute; left: 296px; top: 1663px;
  width: 2288px; height: 127px;
  display: flex;
  padding: 18px 0 0 4px;
  border: 2px solid rgba(190, 180, 184, .35);
  border-radius: 42px;
  background: linear-gradient(#807a7d, #665a5e 50%, #4b363b) border-box;
  box-shadow: 0 0 0 1px rgba(40, 30, 34, .4), 0 0 110px rgba(0, 0, 0, .32);
}
.app { position: relative; width: 104px; flex: none; display: flex; flex-direction: column; align-items: center; }
.app > svg { width: 78px; height: 78px; filter: drop-shadow(0 1px 2px rgba(0, 0, 0, .4)); }
.app > .wide { width: 84px; height: 84px; margin-top: -3px; }
.app > .eclipse { width: 96px; height: 88px; margin: -5px 2px 0 0; }
.run::after { content: ""; position: absolute; left: 48px; top: 95px; width: 8px; height: 8px; border-radius: 50%; background: #d3bbc1; }
.petals rect { mix-blend-mode: multiply; opacity: .75; }
.cal { width: 78px; height: 78px; border-radius: 18px; overflow: hidden; background: #f8f7f5; text-align: center; color: #222; }
.cal b { display: block; height: 24px; background: #e4584d; color: #fff; font-size: 15px; line-height: 27px; }
.cal span { font-size: 46px; line-height: 50px; font-weight: 300; letter-spacing: -1px; }
.count { position: absolute; left: 65px; top: -10px; width: 37px; height: 37px; border-radius: 50%; background: rgba(233, 72, 56, .95); color: #fff; font-size: 20px; line-height: 37px; text-align: center; box-shadow: 0 1px 3px rgba(0, 0, 0, .4); }
.tv { width: 78px; height: 78px; border-radius: 18px; display: flex; align-items: center; justify-content: center; gap: 2px; background: linear-gradient(#28332f, #0c1114); color: #fff; font-size: 34px; font-weight: 500; letter-spacing: -1px; }
.tv svg { width: 24px; height: 28px; fill: #fff; margin-top: -3px; }
.sep { flex: none; width: 2px; height: 94px; margin: -2px 22px 0 22px; background: #9a9094; }
.sep2 { margin-left: 24px; margin-right: 21px; }
.app > .doc { width: 62px; height: 90px; margin-top: -8px; }
.app > .mini { width: 90px; height: 70px; margin-top: 13px; }
.app > .bin { width: 68px; height: 90px; margin: -8px 3px 0 0; }
.shield-t { font: 600 11px Inter, sans-serif; fill: #fff; text-anchor: middle; }
.term { font: 700 19px "Liberation Mono", monospace; fill: #fff; }
```
